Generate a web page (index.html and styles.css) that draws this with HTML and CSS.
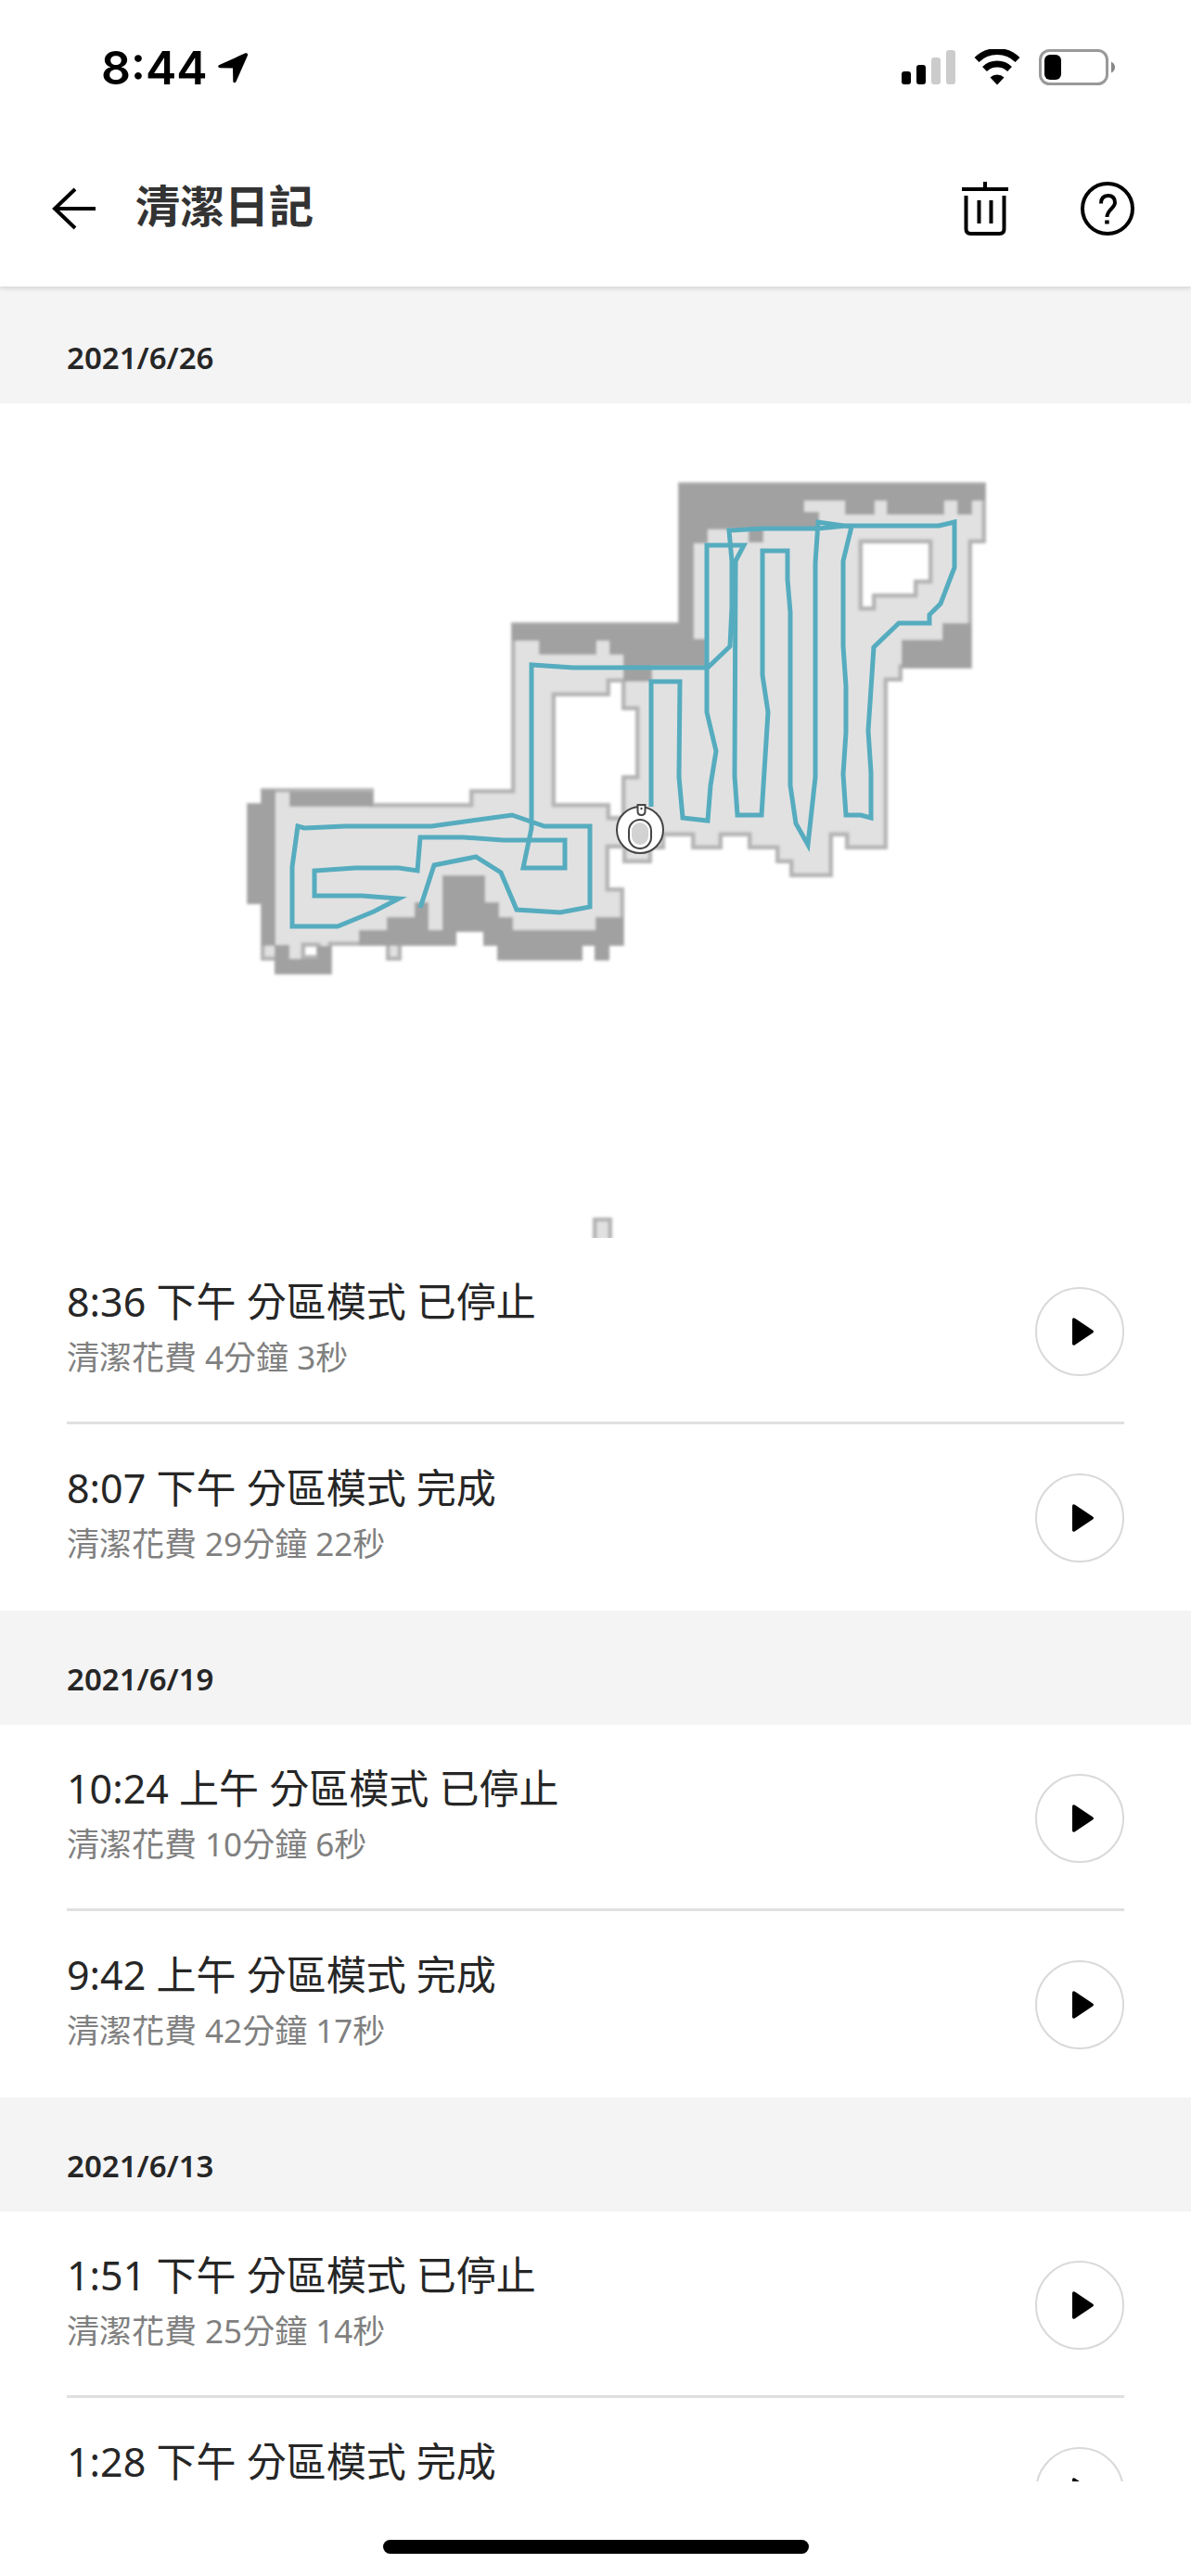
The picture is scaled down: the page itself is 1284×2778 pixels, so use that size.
FILE: index.html
```html
<!DOCTYPE html>
<html lang="zh-Hant">
<head>
    <meta charset="UTF-8">
    <meta name="viewport" content="width=device-width, initial-scale=1.0">
    <title>清潔日記</title>
    <link rel="stylesheet" href="styles.css">
</head>
<body>
    <div class="status-bar">
        <div class="status-left">
            <span class="status-time">8:44</span>
            <svg class="icon" width="34" height="34" viewBox="0 0 34 34">
                <path d="M30.500 1.300Q33.500 0.500 33 3.800L20.500 32Q19 34.500 17.300 32.200L17 17.500L3 17.300Q-0.500 15.800 2.500 14Z"/>
            </svg>
        </div>
        <div class="status-right">
            <svg class="icon" width="58" height="40" viewBox="0 0 58 40">
                <rect x="0" y="24" width="10" height="14" rx="3"/>
                <rect x="16" y="17" width="10" height="21" rx="3"/>
                <rect x="32" y="9" width="10" height="29" rx="3" fill="#ccc"/>
                <rect x="48" y="1" width="10" height="37" rx="3" fill="#ccc"/>
            </svg>
            <svg class="icon" width="50" height="40" viewBox="0 0 50 40">
                <path d="M3 11.500a31.500 31.500 0 0 1 44 0M11.500 21.500a19.500 19.500 0 0 1 27 0" fill="none" stroke="#000" stroke-width="7"/>
                <path d="M17.500 30.500a11 11 0 0 1 15 0L25 38.500z"/>
            </svg>
            <svg class="icon" width="82" height="40" viewBox="0 0 82 40">
                <rect x="1.500" y="1.500" width="72" height="36" rx="10" fill="none" stroke="#999" stroke-width="3"/>
                <rect x="6" y="6" width="18" height="27" rx="6"/>
                <path d="M78 13.500q4 2 4 6t-4 6z" fill="#888"/>
            </svg>
        </div>
    </div>

    <header class="header">
        <button class="header-btn" type="button" aria-label="返回">
            <svg class="icon" width="60" height="60" viewBox="0 0 60 60" fill="none" stroke="#000" stroke-width="4">
                <path d="M55 30H11M33 9L11 30l22 21"/>
            </svg>
        </button>
        <h1 class="header-title">清潔日記</h1>
        <button class="header-btn" type="button" aria-label="刪除">
            <svg class="icon" width="60" height="60" viewBox="0 0 60 60" fill="none" stroke="#000" stroke-width="4">
                <path d="M5 9h50M30 1v8M9.500 16v36q0 5 5 5h31q5 0 5-5V16M23.500 21v25M36.500 21v25"/>
            </svg>
        </button>
        <button class="header-btn" type="button" aria-label="說明">
            <svg class="icon" width="60" height="60" viewBox="0 0 60 60" fill="none" stroke="#000" stroke-width="4">
                <circle cx="30" cy="30" r="27"/>
                <path d="M23 24.500q0-8.500 7.500-8.500t7.500 7.500c0 6-8.500 7.500-8.500 15.500M27.200 44.500h4.500"/>
            </svg>
        </button>
    </header>

    <main class="diary">
        <section class="day">
            <h2 class="day-date">2021/6/26</h2>
            <svg class="map" viewBox="0 435 1284 900" role="img" aria-label="清潔地圖">
                <defs>
                    <path id="floor" fill-rule="evenodd" d="M281 850H403V866H506V851H551V671H731V520H1063V586H1048V721H973V735H957V916H911V902H898V946H851V931H836V916H806V902H779V916H745V902H717V916H703V931H671V915H657V957H673V1020H657V1036H641V1020H628V1036H536V1020H521V1005H492V1020H433V1036H416V1020H358V1051H296V1036H281V975H266V866H281Z
                        M599 751V866H658V880H670V836H685V766H670V736H658V751Z
                        M930 586V654H940V640H985V625H1001V586Z
                        M329 1021V1030H341V1021Z
                        M639 1313H660V1350H639Z"/>
                    <clipPath id="floor-clip"><use href="#floor" clip-rule="evenodd"/></clipPath>
                    <filter id="soft"><feGaussianBlur stdDeviation="1.500"/></filter>
                </defs>
                <g filter="url(#soft)">
                    <use href="#floor" fill="#e1e1e1"/>
                    <!-- walls: the stroke is clipped so that only its inner half shows -->
                    <use class="map-wall" href="#floor" clip-path="url(#floor-clip)"/>
                    <g fill="#a1a1a1">
                        <path d="M732 522H1062V540H1048V555H1032V540H1018V555H956V540H943V555H911V540H867V552H883V570H823V585H807V571H763V586H748V689H762V719H703V735H672V706H657V691H643V706H581V691H552V673H732Z"/>
                        <path d="M1016 672H1047V720H972V690H1016Z"/>
                        <path d="M312 854H402V870H312Z"/>
                        <path d="M282 852H297V1019H312V1034H342V1020H357V1050H296V1020H282V975H267V867H282Z"/>
                        <path d="M387 1003H417V989H447V973H462V1003H477V944H523V973H538V989H553V1003H642V989H672V1020H657V1035H641V1020H628V1035H536V1020H521V1005H492V1020H387Z"/>
                    </g>
                </g>
                <polyline class="map-path" points="702,870 702,735 733,735 732,838 736,882 763,885 766,847 772,810 762,768 762,588 802,588 793,605 792,837 795,879 821,879 828,768 822,728 822,594 849,594 849,625 852,660 852,847 858,888 871,911 879,838 879,607 882,563 918,568 909,605 909,697 912,740 912,790 909,835 912,879 928,879 939,882 939,833 936,788 942,698 969,672 1002,672 1002,663 1014,651 1029,612 1029,563 1012,567 912,567 882,570 823,570 786,572 789,605 789,655 787,697 763,720 618,720 573,717 573,893 564,936 609,936 609,906 542,906 500,903 453,903 450,939 430,936 383,936 339,939 339,966 390,966 430,969 403,983 364,999 315,999 315,935 321,891 328,893 372,891 465,891 552,879 587,891 636,891 636,978 604,984 557,981 540,941 513,924 468,933 453,979"/>
                <g stroke="#444" stroke-width="2">
                    <circle cx="690" cy="895" r="25" fill="#fff"/>
                    <rect x="678" y="884" width="24" height="31" rx="12" fill="#fff"/>
                    <rect x="681" y="887" width="18" height="24" rx="9" fill="#d2d2d2" stroke="none"/>
                    <path d="M687.500 868h8v7q0 4-4 4t-4-4z" fill="#fff"/>
                    <circle cx="691.500" cy="872" r="1.200" fill="#444" stroke="none"/>
                </g>
            </svg>
            <ul class="records">
                <li class="record">
                    <div class="record-text">
                        <p class="record-title">8:36 下午 分區模式 已停止</p>
                        <p class="record-time">清潔花費 4分鐘 3秒</p>
                    </div>
                    <button class="play-btn" type="button" aria-label="播放">
                        <svg class="icon" width="24" height="30" viewBox="0 0 24 30"><path d="M0 1.500Q1 -0.500 3 0.800L22 13.500Q24 15 22 16.500L3 29.200Q1 30.500 0 28.500Z"/></svg>
                    </button>
                </li>
                <li class="record">
                    <div class="record-text">
                        <p class="record-title">8:07 下午 分區模式 完成</p>
                        <p class="record-time">清潔花費 29分鐘 22秒</p>
                    </div>
                    <button class="play-btn" type="button" aria-label="播放">
                        <svg class="icon" width="24" height="30" viewBox="0 0 24 30"><path d="M0 1.500Q1 -0.500 3 0.800L22 13.500Q24 15 22 16.500L3 29.200Q1 30.500 0 28.500Z"/></svg>
                    </button>
                </li>
            </ul>
        </section>

        <section class="day">
            <h2 class="day-date">2021/6/19</h2>
            <ul class="records">
                <li class="record">
                    <div class="record-text">
                        <p class="record-title">10:24 上午 分區模式 已停止</p>
                        <p class="record-time">清潔花費 10分鐘 6秒</p>
                    </div>
                    <button class="play-btn" type="button" aria-label="播放">
                        <svg class="icon" width="24" height="30" viewBox="0 0 24 30"><path d="M0 1.500Q1 -0.500 3 0.800L22 13.500Q24 15 22 16.500L3 29.200Q1 30.500 0 28.500Z"/></svg>
                    </button>
                </li>
                <li class="record">
                    <div class="record-text">
                        <p class="record-title">9:42 上午 分區模式 完成</p>
                        <p class="record-time">清潔花費 42分鐘 17秒</p>
                    </div>
                    <button class="play-btn" type="button" aria-label="播放">
                        <svg class="icon" width="24" height="30" viewBox="0 0 24 30"><path d="M0 1.500Q1 -0.500 3 0.800L22 13.500Q24 15 22 16.500L3 29.200Q1 30.500 0 28.500Z"/></svg>
                    </button>
                </li>
            </ul>
        </section>

        <section class="day">
            <h2 class="day-date">2021/6/13</h2>
            <ul class="records">
                <li class="record">
                    <div class="record-text">
                        <p class="record-title">1:51 下午 分區模式 已停止</p>
                        <p class="record-time">清潔花費 25分鐘 14秒</p>
                    </div>
                    <button class="play-btn" type="button" aria-label="播放">
                        <svg class="icon" width="24" height="30" viewBox="0 0 24 30"><path d="M0 1.500Q1 -0.500 3 0.800L22 13.500Q24 15 22 16.500L3 29.200Q1 30.500 0 28.500Z"/></svg>
                    </button>
                </li>
                <li class="record">
                    <div class="record-text">
                        <p class="record-title">1:28 下午 分區模式 完成</p>
                    </div>
                    <button class="play-btn" type="button" aria-label="播放">
                        <svg class="icon" width="24" height="30" viewBox="0 0 24 30"><path d="M0 1.500Q1 -0.500 3 0.800L22 13.500Q24 15 22 16.500L3 29.200Q1 30.500 0 28.500Z"/></svg>
                    </button>
                </li>
            </ul>
        </section>
    </main>

    <footer class="home-area">
        <div class="home-bar"></div>
    </footer>
</body>
</html>
```
FILE: styles.css
```css
* {
    box-sizing: border-box;
}
body {
    margin: 0;
    height: 100vh;
    display: flex;
    flex-direction: column;
    background-color: #fff;
    color: #262626;
    font-family: "Noto Sans", "Noto Sans CJK TC", sans-serif;
}
h1, h2, p, ul {
    margin: 0;
    padding: 0;
}
button {
    padding: 0;
    border: none;
    background: none;
    cursor: pointer;
}
.icon {
    display: block;
    flex-shrink: 0;
}

/* status bar */
.status-bar {
    position: relative;
    z-index: 2;
    flex-shrink: 0;
    height: 145px;
    padding: 0 82px 0 109px;
    display: flex;
    align-items: center;
    justify-content: space-between;
    background-color: #fff;
}
.status-left {
    display: flex;
    align-items: center;
    gap: 10px;
}
.status-time {
    color: #000;
    font-family: Inter, sans-serif;
    font-size: 50px;
    font-weight: 600;
    line-height: 60px;
}
.status-right {
    display: flex;
    align-items: center;
    gap: 20px;
}

/* header */
.header {
    position: relative;
    z-index: 1;
    flex-shrink: 0;
    height: 164px;
    padding: 0 60px 4px 48px;
    display: flex;
    align-items: center;
    background-color: #fff;
    box-shadow: 0 2px 5px rgba(0, 0, 0, 0.14);
}
.header-title {
    flex: 1;
    margin-left: 38px;
    padding-bottom: 6px;
    color: #333;
    font-size: 48px;
    font-weight: bold;
    line-height: 72px;
}
.header-btn + .header-btn {
    margin-left: 72px;
}

/* diary list */
.diary {
    flex: 1;
    min-height: 0;
    padding-top: 3px;
    overflow: hidden;
    background-color: #f4f4f4;
}
.day-date {
    height: 123px;
    padding: 50px 72px 0;
    font-size: 33px;
    font-weight: 600;
    line-height: 48px;
}
.map {
    display: block;
    width: 100%;
    background-color: #fff;
}
.map-wall {
    fill: none;
    stroke: #b4b4b4;
    stroke-width: 9;
}
.map-path {
    fill: none;
    stroke: #56acbf;
    stroke-width: 5;
}
.records {
    list-style: none;
    padding: 0 72px;
    background-color: #fff;
}
.record {
    height: 201px;
    padding-top: 3px;
    display: flex;
    align-items: center;
    justify-content: space-between;
    border-bottom: 3px solid #e0e0e0;
}
.record:last-child {
    border-bottom-color: transparent;
}
.record-text {
    height: 124px;
}
.record-title {
    font-size: 43px;
    line-height: 60px;
}
.record-time {
    color: #808080;
    font-size: 35px;
    line-height: 60px;
}
.play-btn {
    width: 96px;
    height: 96px;
    padding-left: 8px;
    display: flex;
    align-items: center;
    justify-content: center;
    border: 2px solid #d9d9d9;
    border-radius: 50%;
}

.home-area {
    flex-shrink: 0;
    height: 102px;
    padding-top: 63px;
}
.home-bar {
    width: 36%;
    max-width: 459px;
    height: 15px;
    margin: 0 auto;
    border-radius: 8px;
    background-color: #000;
}
```
